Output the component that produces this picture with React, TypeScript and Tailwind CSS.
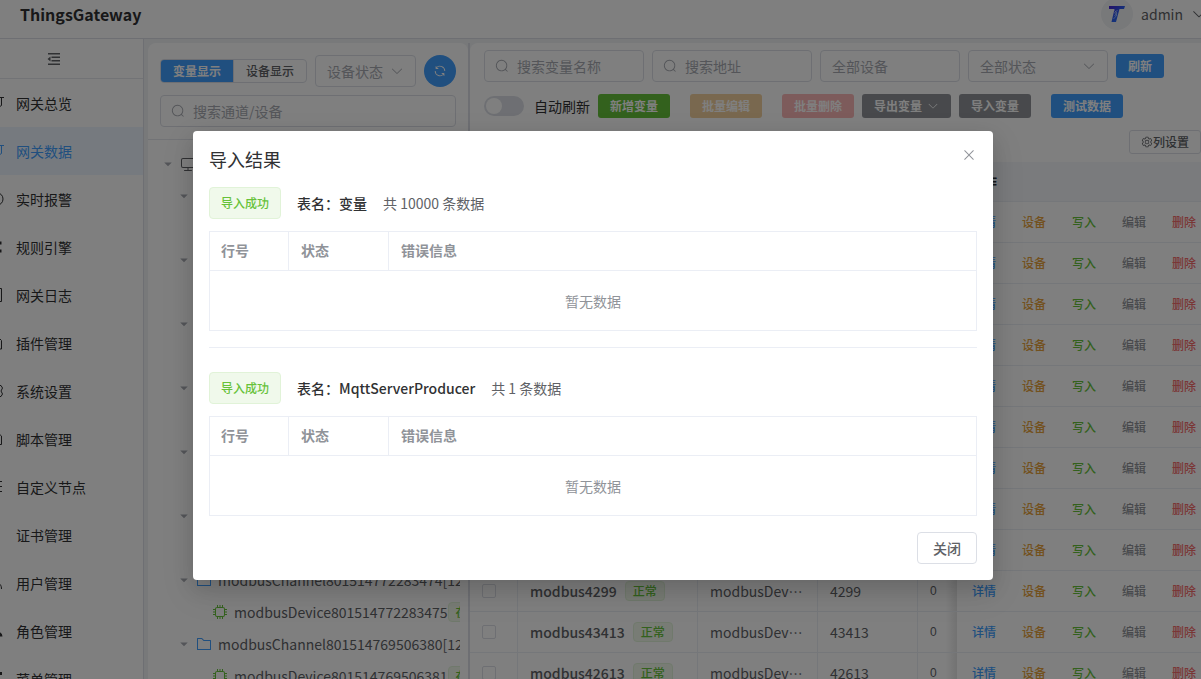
import React from "react";

const paths = {
  search:
    "m795.904 750.72 124.992 124.928a32 32 0 0 1-45.248 45.248L750.656 795.904a416 416 0 1 1 45.248-45.248zM480 832a352 352 0 1 0 0-704 352 352 0 0 0 0 704z",
  down:
    "M831.872 340.864 512 652.672 192.128 340.864a30.592 30.592 0 0 0-42.752 0 29.12 29.12 0 0 0 0 41.6L489.664 714.24a32 32 0 0 0 44.672 0l340.288-331.712a29.12 29.12 0 0 0 0-41.728 30.592 30.592 0 0 0-42.752 0z",
  refresh:
    "M771.776 794.88A384 384 0 0 1 128 512h64a320 320 0 0 0 555.712 216.448H654.72a32 32 0 1 1 0-64h149.056a32 32 0 0 1 32 32v148.928a32 32 0 1 1-64 0v-50.56zM276.288 295.616h92.992a32 32 0 0 1 0 64H220.16a32 32 0 0 1-32-32V178.56a32 32 0 0 1 64 0v50.56A384 384 0 0 1 896.128 512h-64a320 320 0 0 0-555.776-216.384z",
  close:
    "M764.288 214.592 512 466.88 259.712 214.592a31.936 31.936 0 0 0-45.12 45.12L466.752 512 214.528 764.224a31.936 31.936 0 1 0 45.12 45.184L512 557.184l252.288 252.288a31.936 31.936 0 0 0 45.12-45.12L557.12 512.064l252.288-252.352a31.936 31.936 0 1 0-45.12-45.184z",
  folder:
    "M128 192v640h768V320H485.76L357.504 192H128zm-32-64h287.872l128.384 128H928a32 32 0 0 1 32 32v576a32 32 0 0 1-32 32H96a32 32 0 0 1-32-32V160a32 32 0 0 1 32-32z",
  monitor:
    "M544 768v128h192a32 32 0 1 1 0 64H288a32 32 0 1 1 0-64h192V768H192A128 128 0 0 1 64 640V256a128 128 0 0 1 128-128h640a128 128 0 0 1 128 128v384a128 128 0 0 1-128 128H544zM192 192a64 64 0 0 0-64 64v384a64 64 0 0 0 64 64h640a64 64 0 0 0 64-64V256a64 64 0 0 0-64-64H192z",
  caret: "m192 384 320 320 320-320z",
  fold: "M896 128H128v96h768zm0 224H352v96h544zm0 224H352v96h544zm0 224H128v96h768zM288 352 96 512l192 160z",
  cpu:
    "M320 256a64 64 0 0 0-64 64v384a64 64 0 0 0 64 64h384a64 64 0 0 0 64-64V320a64 64 0 0 0-64-64H320zm0-64h384a128 128 0 0 1 128 128v384a128 128 0 0 1-128 128H320a128 128 0 0 1-128-128V320a128 128 0 0 1 128-128zM480 64h64v160h-64zM640 64h64v160h-64zM320 64h64v160h-64zM480 800h64v160h-64zM640 800h64v160h-64zM320 800h64v160h-64zM64 480h160v64H64zM64 320h160v64H64zM64 640h160v64H64zM800 480h160v64H800zM800 320h160v64H800zM800 640h160v64H800z",
  setting:
    "M600.704 64a32 32 0 0 1 30.464 22.208l35.2 109.376c14.784 7.232 28.928 15.36 42.432 24.512l112.384-24.192a32 32 0 0 1 34.432 15.36L944.32 364.8a32 32 0 0 1-4.032 37.504l-77.12 85.12a357.12 357.12 0 0 1 0 49.024l77.12 85.248a32 32 0 0 1 4.032 37.504l-88.704 153.6a32 32 0 0 1-34.432 15.296L708.8 803.904c-13.44 9.088-27.648 17.28-42.368 24.512l-35.264 109.376A32 32 0 0 1 600.704 960H423.296a32 32 0 0 1-30.464-22.208L357.696 828.48a351.616 351.616 0 0 1-42.56-24.64l-112.32 24.256a32 32 0 0 1-34.432-15.36L79.68 659.2a32 32 0 0 1 4.032-37.504l77.12-85.248a357.12 357.12 0 0 1 0-48.896l-77.12-85.248A32 32 0 0 1 79.68 364.8l88.704-153.6a32 32 0 0 1 34.432-15.296l112.32 24.256c13.568-9.152 27.776-17.408 42.56-24.64l35.2-109.312A32 32 0 0 1 423.232 64H600.64zm-23.424 64H446.72l-36.352 113.088-24.512 11.968a294.113 294.113 0 0 0-34.816 20.096l-22.656 15.36-116.224-25.088-65.28 113.152 79.68 88.192-1.92 27.136a293.12 293.12 0 0 0 0 40.192l1.92 27.136-79.808 88.192 65.344 113.152 116.224-25.024 22.656 15.296a294.113 294.113 0 0 0 34.816 20.096l24.512 11.968L446.72 896h130.688l36.48-113.152 24.448-11.904a288.282 288.282 0 0 0 34.752-20.096l22.592-15.296 116.288 25.024 65.28-113.152-79.744-88.192 1.92-27.136a293.12 293.12 0 0 0 0-40.256l-1.92-27.136 79.808-88.128-65.344-113.152-116.288 24.96-22.592-15.232a287.616 287.616 0 0 0-34.752-20.096l-24.448-11.904L577.344 128zM512 320a192 192 0 1 1 0 384 192 192 0 0 1 0-384zm0 64a128 128 0 1 0 0 256 128 128 0 0 0 0-256z",
};

function Icon({ name, className }: { name: keyof typeof paths; className: string }) {
  return (
    <svg viewBox="0 0 1024 1024" fill="currentColor" aria-hidden="true" className={`shrink-0 ${className}`}>
      <path d={paths[name]} />
    </svg>
  );
}

const menu = [
  { label: "网关总览", d: "M0 2.5H16M13.5 2.5V10.5L11 12" },
  { label: "网关数据", d: "M0 2.5H16M13.5 2.5V10.5L11 12", active: true },
  { label: "实时报警", d: "M9.5 2A5.5 6 0 0 1 9.5 14A5.5 6 0 0 1 9.5 2" },
  { label: "规则引擎", d: "M12 2.5v3M12 10.5v3", thick: true },
  { label: "网关日志", d: "M2 1.5H13.5V14.5H2Z" },
  { label: "插件管理", d: "M3 3H11L13.5 5.5V14H3Z" },
  { label: "系统设置", d: "M8 2.5H13L14.5 5L13 8L14.5 11L13 13.5H8" },
  { label: "脚本管理", d: "M3 2H10L13.5 5V13.5H3Z" },
  { label: "自定义节点", d: "M2 2.5H14M2 7.5H14M2 12.5H14" },
  { label: "证书管理", d: "" },
  { label: "用户管理", d: "M10 8.5Q13.5 9 13.5 14" },
  { label: "角色管理", d: "M10 10Q13 11 13 13.5", thick: true },
  { label: "菜单管理", d: "M12.5 1V4M12.5 9V14", thick: true },
];

const tree = [
  { channel: "", device: "" },
  { channel: "", device: "" },
  { channel: "", device: "" },
  { channel: "", device: "" },
  { channel: "", device: "" },
  { channel: "", device: "" },
  { channel: "modbusChannel801514772283474[127.0.0.1:502]", device: "modbusDevice801514772283475" },
  { channel: "modbusChannel801514769506380[127.0.0.1:502]", device: "modbusDevice801514769506381" },
];

const rows = [
  ...Array.from({ length: 9 }, () => ({ name: "", device: "", address: "", value: "" })),
  { name: "modbus4299", device: "modbusDevice801514772283475", address: "4299", value: "0" },
  { name: "modbus43413", device: "modbusDevice801514772283475", address: "43413", value: "0" },
  { name: "modbus42613", device: "modbusDevice801514772283475", address: "42613", value: "0" },
];

const actions = [
  { label: "详情", color: "text-[#409eff]" },
  { label: "设备", color: "text-[#e6a23c]" },
  { label: "写入", color: "text-[#67c23a]" },
  { label: "编辑", color: "text-[#909399]" },
  { label: "删除", color: "text-[#f56c6c]" },
];

function SearchBox({ placeholder, className }: { placeholder: string; className: string }) {
  return (
    <label className={`flex h-8 items-center gap-2 rounded border border-[#dcdfe6] bg-white px-2.5 text-[#a8abb2] ${className}`}>
      <Icon name="search" className="size-3.5" />
      <input
        aria-label={placeholder}
        placeholder={placeholder}
        className="w-full min-w-0 bg-transparent text-sm outline-none placeholder:text-[#a8abb2]"
      />
    </label>
  );
}

function Dropdown({ label, className }: { label: string; className: string }) {
  return (
    <div className={`grid h-8 items-center rounded border border-[#dcdfe6] bg-white px-[11px] text-[#a8abb2] ${className}`}>
      <select aria-label={label} className="col-start-1 row-start-1 w-full appearance-none bg-transparent text-sm outline-none">
        <option>{label}</option>
      </select>
      <Icon name="down" className="pointer-events-none col-start-1 row-start-1 size-3.5 justify-self-end" />
    </div>
  );
}

function Sidebar() {
  return (
    <aside className="w-36 shrink-0 overflow-hidden border-r border-[#dcdfe6] bg-white">
      <div className="flex h-10 items-center justify-center border-b border-[#e4e7ed] pr-9 text-[#606266]">
        <button type="button" aria-label="折叠菜单">
          <Icon name="fold" className="size-4" />
        </button>
      </div>
      <nav>
        {menu.map((m) => (
          <a
            key={m.label}
            href="#"
            className={`flex h-12 items-center gap-3 text-sm ${m.active ? "bg-[#ecf5ff] text-[#409eff]" : "text-[#303133]"}`}
          >
            <svg
              viewBox="0 0 16 16"
              fill="none"
              stroke="currentColor"
              strokeWidth={m.thick ? 3 : 1}
              aria-hidden="true"
              className="-ml-3 size-4 shrink-0"
            >
              <path d={m.d} />
            </svg>
            {m.label}
          </a>
        ))}
      </nav>
    </aside>
  );
}

function ChannelPanel() {
  return (
    <section className="w-80 shrink-0 overflow-hidden rounded-t-lg bg-white">
      <div className="flex flex-col gap-2 border-b border-[#e4e7ed] p-3">
        <div className="flex items-center gap-2">
          <div className="flex h-6 overflow-hidden rounded border border-[#dcdfe6] text-xs">
            <label className="flex items-center bg-[#409eff] px-3 font-bold text-white">
              <input type="radio" name="view" defaultChecked className="sr-only" />
              变量显示
            </label>
            <label className="flex items-center border-l border-[#dcdfe6] px-3 font-medium text-[#606266]">
              <input type="radio" name="view" className="sr-only" />
              设备显示
            </label>
          </div>
          <Dropdown label="设备状态" className="min-w-0 flex-1" />
          <button type="button" aria-label="刷新设备" className="flex size-8 shrink-0 items-center justify-center rounded-full bg-[#409eff] text-white">
            <Icon name="refresh" className="size-3.5" />
          </button>
        </div>
        <SearchBox placeholder="搜索通道/设备" className="" />
      </div>
      <div className="mr-2 ml-3 overflow-hidden pt-2 text-sm whitespace-nowrap text-[#606266]">
        <div className="flex h-8 items-center">
          <Icon name="caret" className="mx-0.5 size-3 text-[#a8abb2]" />
          <Icon name="monitor" className="ml-1 size-4" />
        </div>
        {tree.map((t, i) => (
          <div key={i}>
            <div className="flex h-8 items-center pl-4">
              <Icon name="caret" className="mx-0.5 size-3 text-[#a8abb2]" />
              <Icon name="folder" className="mr-1.5 ml-1 size-4 text-[#409eff]" />
              <span>{t.channel}</span>
            </div>
            <div className="flex h-8 items-center pl-[52px]">
              <Icon name="cpu" className="mr-1.5 size-4 text-[#67c23a]" />
              <span>{t.device}</span>
              <span className="flex h-5 items-center rounded border border-[#e1f3d8] bg-[#f0f9eb] px-[7px] text-xs font-medium text-[#67c23a]">在线</span>
            </div>
          </div>
        ))}
      </div>
    </section>
  );
}

const smallButton = "flex h-6 items-center justify-center gap-[5px] rounded-[3px] px-3 text-xs font-bold text-white";

function VariablePanel() {
  return (
    <section className="min-w-0 flex-1 overflow-hidden rounded-tl-lg bg-white">
      <div className="flex items-center gap-2 pt-[7px] pl-3.5">
        <SearchBox placeholder="搜索变量名称" className="w-40" />
        <SearchBox placeholder="搜索地址" className="w-40" />
        <input
          aria-label="全部设备"
          placeholder="全部设备"
          className="h-8 w-[140px] rounded border border-[#dcdfe6] px-[11px] text-sm placeholder:text-[#a8abb2]"
        />
        <Dropdown label="全部状态" className="w-[140px]" />
        <button type="button" className={`${smallButton} bg-[#409eff]`}>刷新</button>
      </div>
      <div className="flex items-center gap-2 pt-3 pl-3.5">
        <label className="flex items-center gap-2.5 text-sm text-[#303133]">
          <input
            type="checkbox"
            role="switch"
            className="flex h-5 w-10 appearance-none items-center rounded-full bg-[#dcdfe6] px-0.5 before:size-4 before:rounded-full before:bg-white"
          />
          自动刷新
        </label>
        <button type="button" className={`${smallButton} bg-[#67c23a]`}>新增变量</button>
        <button type="button" disabled className={`${smallButton} ml-3 bg-[#f3d19e]`}>批量编辑</button>
        <button type="button" disabled className={`${smallButton} ml-3 bg-[#fab6b6]`}>批量删除</button>
        <button type="button" className={`${smallButton} bg-[#909399]`}>
          导出变量
          <Icon name="down" className="size-3" />
        </button>
        <button type="button" className={`${smallButton} bg-[#909399]`}>导入变量</button>
        <button type="button" className={`${smallButton} ml-3 bg-[#409eff]`}>测试数据</button>
      </div>
      <div className="flex justify-end pt-3 pb-2">
        <button type="button" className="flex h-6 items-center rounded-[3px] border border-[#dcdfe6] px-[11px] text-xs font-medium text-[#606266]">
          <Icon name="setting" className="size-3" />
          列设置
        </button>
      </div>
      <table className="w-full table-fixed border-separate border-spacing-0 text-left text-sm text-[#606266]">
        <colgroup>
          <col className="w-12" />
          <col className="w-[180px]" />
          <col className="w-[120px]" />
          <col className="w-[100px]" />
          <col className="w-[39px]" />
          <col />
        </colgroup>
        <thead className="bg-[#f5f7fa] text-[#303133]">
          <tr className="h-10">
            <th colSpan={5} className="border-b border-[#ebeef5]" />
            <th className="border-b border-[#ebeef5] px-3 pb-0.5 font-bold">操作</th>
          </tr>
        </thead>
        <tbody>
          {rows.map((r, i) => (
            <tr key={i} className="h-[41px]">
              <td className="border-r border-b border-[#ebeef5] px-3">
                <input type="checkbox" aria-label="选择" className="block size-3.5 appearance-none rounded-xs border border-[#dcdfe6] bg-white" />
              </td>
              <td className="border-r border-b border-[#ebeef5] px-3">
                {r.name && (
                  <div className="flex items-center gap-2">
                    <span className="font-medium">{r.name}</span>
                    <span className="flex h-5 items-center rounded border border-[#e1f3d8] bg-[#f0f9eb] px-[7px] text-xs font-medium text-[#67c23a]">正常</span>
                  </div>
                )}
              </td>
              <td className="truncate border-r border-b border-[#ebeef5] px-3">{r.device}</td>
              <td className="border-r border-b border-[#ebeef5] px-3">{r.address}</td>
              <td className="border-b border-[#ebeef5] bg-linear-to-r from-transparent from-70% to-black/10 px-3 font-['Liberation_Sans',sans-serif] text-xs">
                {r.value}
              </td>
              <td className="border-b border-[#ebeef5] pl-[15px]">
                <div className="flex gap-[26px] text-xs font-medium">
                  {actions.map((a) => (
                    <button key={a.label} type="button" className={`shrink-0 ${a.color}`}>
                      {a.label}
                    </button>
                  ))}
                </div>
              </td>
            </tr>
          ))}
        </tbody>
      </table>
    </section>
  );
}

function ImportResult({ name, count }: { name: string; count: number }) {
  return (
    <section>
      <div className="mb-3 flex items-center gap-4 text-sm">
        <span className="flex h-8 items-center rounded border border-[#e1f3d8] bg-[#f0f9eb] px-[11px] text-xs font-medium text-[#67c23a]">
          导入成功
        </span>
        <h3 className="font-medium text-[#303133]">表名：{name}</h3>
        <span className="text-[#606266]">共 {count} 条数据</span>
      </div>
      <table className="w-full table-fixed border-separate border-spacing-0 border border-[#ebeef5] text-left text-sm text-[#909399]">
        <colgroup>
          <col className="w-[79px]" />
          <col className="w-[100px]" />
          <col />
        </colgroup>
        <thead>
          <tr className="h-[39px]">
            <th className="border-r border-b border-[#ebeef5] px-[11px] pb-0.5 font-bold">行号</th>
            <th className="border-r border-b border-[#ebeef5] px-3 pb-0.5 font-bold">状态</th>
            <th className="border-b border-[#ebeef5] px-3 pb-0.5 font-bold">错误信息</th>
          </tr>
        </thead>
        <tbody>
          <tr className="h-[59px]">
            <td colSpan={3} className="text-center">暂无数据</td>
          </tr>
        </tbody>
      </table>
    </section>
  );
}

export default function App() {
  return (
    <div className="relative flex h-screen flex-col overflow-hidden bg-[#f0f2f5] font-['Noto_Sans_CJK_SC',sans-serif]">
      <header className="flex h-[39px] shrink-0 items-center border-b border-[#dcdfe6] bg-white pb-2.5 pl-5">
        <h1 className="text-base font-bold text-[#303133]">ThingsGateway</h1>
        <button type="button" className="-mr-1.5 ml-auto flex items-center gap-2 text-sm text-[#606266]">
          <span className="flex size-8 items-center justify-center rounded-full bg-[#f0f2f5]">
            <svg viewBox="0 0 16 16" aria-hidden="true" className="size-4">
              <defs>
                <linearGradient id="brand" x1="0" y1="0" x2="1" y2="1">
                  <stop offset="0" stopColor="#4a1fd0" />
                  <stop offset="0.5" stopColor="#2c5cf0" />
                  <stop offset="1" stopColor="#2a7bff" />
                </linearGradient>
              </defs>
              <path fill="url(#brand)" d="M0 0H16L15 3H10.5L7 16H2.5L5.5 3H0Z" />
              <path fill="none" stroke="#bcd6ff" strokeWidth="0.7" d="M8.5 4L5.5 7L8 9L4.5 13M5.5 4.5L8 7L5.5 10" />
            </svg>
          </span>
          <span>admin</span>
          <Icon name="down" className="size-4" />
        </button>
      </header>
      <div className="flex min-h-0 flex-1">
        <Sidebar />
        <main className="flex min-w-0 flex-1 pt-1 pl-1">
          <ChannelPanel />
          <div className="w-0.5 shrink-0 bg-[#dcdfe6]" />
          <VariablePanel />
        </main>
      </div>

      <div className="absolute inset-0 flex items-start justify-center bg-black/50 pt-[131px] pr-[15px]">
        <div
          role="dialog"
          aria-modal="true"
          aria-labelledby="dialog-title"
          className="w-[800px] rounded bg-white p-4 shadow-[0_12px_32px_4px_rgba(0,0,0,0.08),0_8px_20px_rgba(0,0,0,0.12)]"
        >
          <header className="flex h-10 items-start justify-between pb-4">
            <h2 id="dialog-title" className="text-lg leading-6 text-[#303133]">导入结果</h2>
            <button type="button" aria-label="关闭对话框" className="text-[#909399]">
              <Icon name="close" className="size-4" />
            </button>
          </header>
          <ImportResult name="变量" count={10000} />
          <hr className="mt-4 mb-6 border-[#ebeef5]" />
          <ImportResult name="MqttServerProducer" count={1} />
          <footer className="flex justify-end pt-4">
            <button type="button" className="h-8 rounded border border-[#dcdfe6] px-[15px] text-sm font-medium text-[#606266]">关闭</button>
          </footer>
        </div>
      </div>
    </div>
  );
}
